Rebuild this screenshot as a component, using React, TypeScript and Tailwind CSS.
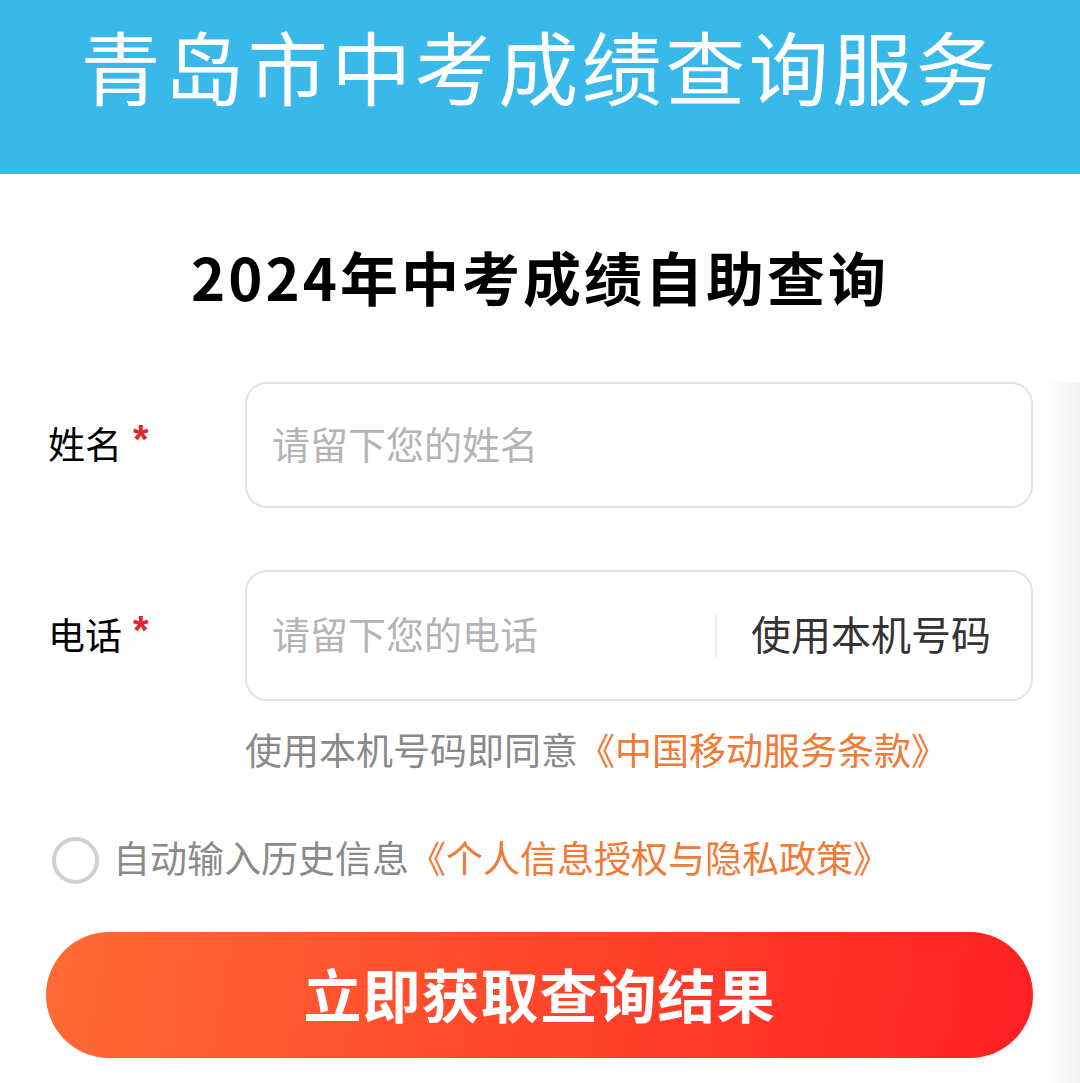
import React from "react";

const font = { fontFamily: '"Noto Sans CJK SC", "Noto Sans", sans-serif' };

export default function App() {
  return (
    <div className="w-[1080px] h-[1083px] bg-white overflow-hidden flex flex-col" style={font}>
      <header className="h-[174px] shrink-0 bg-[#38b9e9] flex justify-center pt-[16px]">
        <h1 className="text-white text-[80px] leading-[96px] tracking-[3.5px] font-normal">青岛市中考成绩查询服务</h1>
      </header>

      <h2 className="mt-[62px] text-center text-black text-[58px] leading-[80px] font-bold tracking-[3px]">
        2024年中考成绩自助查询
      </h2>

      <main className="mt-[66px] flex-1 flex flex-col bg-[linear-gradient(to_left,#f2f2f2,#ffffff_34px)]">
        <div className="flex flex-col pl-[48px] pr-[47px]">
          <div className="flex items-center">
            <div className="w-[197px] flex items-start text-[37px] leading-[48px] text-black pb-[4px]">
              <span>姓名</span>
              <span className="ml-[11px] text-[#e0262a] text-[40px] leading-[40px] font-bold" style={{ fontFamily: '"Liberation Sans", sans-serif' }}>*</span>
            </div>
            <div className="flex-1 h-[126px] border-2 border-[#e3e3e3] rounded-[22px] bg-white flex items-center pl-[25px] pb-[5px]">
              <span className="text-[38px] text-[#b4b4b4] leading-[48px]">请留下您的姓名</span>
            </div>
          </div>

          <div className="flex items-center mt-[62px]">
            <div className="w-[197px] flex items-start text-[37px] leading-[48px] text-black pb-[4px]">
              <span>电话</span>
              <span className="ml-[11px] text-[#e0262a] text-[40px] leading-[40px] font-bold" style={{ fontFamily: '"Liberation Sans", sans-serif' }}>*</span>
            </div>
            <div className="flex-1 h-[131px] border-2 border-[#e3e3e3] rounded-[22px] bg-white flex items-center pl-[25px] pb-[5px]">
              <span className="flex-1 text-[38px] text-[#b4b4b4] leading-[48px]">请留下您的电话</span>
              <div className="w-[2px] h-[42px] bg-[#ececec] mt-[5px]" />
              <span className="ml-[34px] mr-[40px] text-[40px] text-[#333333] leading-[52px]">使用本机号码</span>
            </div>
          </div>

          <p className="mt-[24px] ml-[197px] text-[37px] leading-[48px] text-[#8a8a8a]">
            使用本机号码即同意<span className="text-[#f07a36]">《中国移动服务条款》</span>
          </p>

          <div className="mt-[56px] flex items-center ml-[4px]">
            <div className="w-[47px] h-[47px] rounded-full border-[4px] border-[#d0d0d0] mt-[8px]" />
            <p className="ml-[14px] text-[37px] leading-[48px] text-[#8a8a8a]">
              自动输入历史信息<span className="text-[#f07a36]">《个人信息授权与隐私政策》</span>
            </p>
          </div>

          <button className="mt-[48px] -ml-[2px] h-[126px] rounded-full bg-[linear-gradient(100deg,#ff6b33,#ff4a2c_45%,#ff1f22)] flex items-center justify-center">
            <span className="text-white text-[58px] leading-[70px] font-bold tracking-[1px] pb-[4px]">立即获取查询结果</span>
          </button>
        </div>
      </main>
    </div>
  );
}
